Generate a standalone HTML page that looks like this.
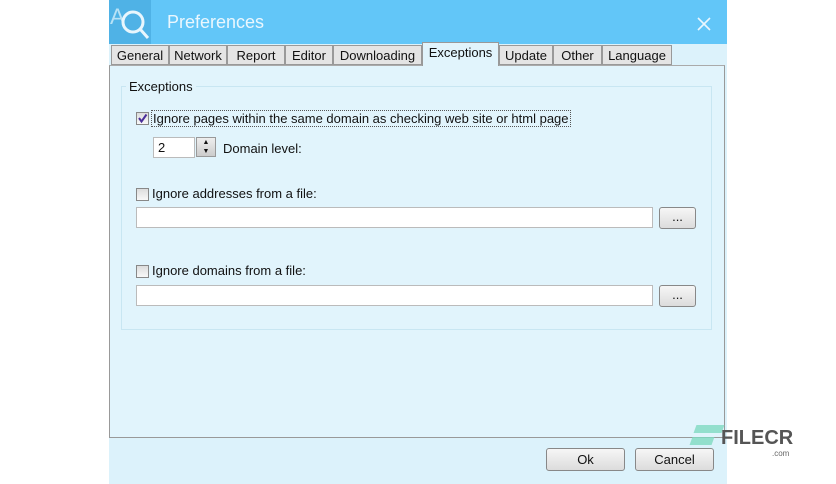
<!DOCTYPE html><html><head><style>
body{margin:0;width:836px;height:484px;background:#fff;position:relative;overflow:hidden;font-family:"Liberation Sans",sans-serif;font-size:12.5px;color:#111}
.a{position:absolute}
.tab{position:absolute;top:45px;height:20px;border:1px solid #999;background:#e4e4e4;line-height:20px;text-align:center;font-size:13px;box-sizing:border-box}
.cb{position:absolute;width:11px;height:11px;border:1px solid #888;background:linear-gradient(#ddd,#f8f8f8)}
.inp{position:absolute;height:21px;background:#fff;border:1px solid #bbb;box-sizing:border-box}
.btn{position:absolute;border:1px solid #888;border-radius:3px;background:linear-gradient(#f6f6f6,#dcdcdc);box-sizing:border-box;text-align:center;font-size:13px}
</style></head><body>
<div class="a" style="left:109px;top:0;width:618px;height:44px;background:#62c6f8"></div>
<div class="a" style="left:109px;top:0;width:42px;height:44px;background:#4fb2e6"></div>
<svg class="a" style="left:109px;top:2px" width="44" height="40"><text x="1" y="22" font-size="22" fill="#b8e2f6" font-family="Liberation Sans">A</text><circle cx="24" cy="20" r="10" fill="none" stroke="#e8f6fd" stroke-width="3"/><line x1="31" y1="27" x2="39" y2="36" stroke="#e8f6fd" stroke-width="3"/></svg>
<div class="a" style="left:167px;top:12px;font-size:18px;color:#eaf7fe">Preferences</div>
<svg class="a" style="left:697px;top:17px" width="14" height="14"><path d="M1 1L13 13M13 1L1 13" stroke="#eaf7fe" stroke-width="1.6"/></svg>
<div class="a" style="left:109px;top:44px;width:618px;height:440px;background:#dcf2fb"></div>
<div class="a" style="left:109px;top:65px;width:616px;height:373px;background:#e1f4fc;border:1px solid #999;border-top:1px solid #aaa;box-sizing:border-box"></div>
<div class="tab" style="left:111px;width:58px">General</div>
<div class="tab" style="left:169px;width:58px">Network</div>
<div class="tab" style="left:227px;width:58px">Report</div>
<div class="tab" style="left:285px;width:48px">Editor</div>
<div class="tab" style="left:333px;width:89px">Downloading</div>
<div class="tab" style="left:422px;width:77px;top:42px;height:24px;background:#e1f4fc;border-bottom:none">Exceptions</div>
<div class="tab" style="left:499px;width:54px">Update</div>
<div class="tab" style="left:553px;width:49px">Other</div>
<div class="tab" style="left:602px;width:70px">Language</div>
<div class="a" style="left:121px;top:86px;width:591px;height:244px;border:1px solid #c8e6f2;box-sizing:border-box"></div>
<div class="a" style="left:126px;top:79px;padding:0 3px;background:#e1f4fc;font-size:13px">Exceptions</div>
<div class="cb" style="left:136px;top:112px"></div>
<svg class="a" style="left:137px;top:113px" width="11" height="11"><path d="M2 5L4.5 8.5L9.5 1.5" stroke="#4a2f9a" stroke-width="2" fill="none"/></svg>
<div class="a" style="left:151px;top:110px;font-size:13px;border:1px dotted #555;padding:0 1px">Ignore pages within the same domain as checking web site or html page</div>
<div class="inp" style="left:153px;top:137px;width:42px;padding-left:4px;line-height:19px;font-size:13px">2</div>
<div class="a" style="left:196px;top:137px;width:20px;height:20px;border:1px solid #999;box-sizing:border-box;background:linear-gradient(#eee,#ccc);font-size:7px;line-height:9px;text-align:center">▲<br>▼</div>
<div class="a" style="left:223px;top:141px;font-size:13px">Domain level:</div>
<div class="cb" style="left:136px;top:188px"></div>
<div class="a" style="left:152px;top:186px;font-size:13px">Ignore addresses from a file:</div>
<div class="inp" style="left:136px;top:207px;width:517px"></div>
<div class="btn" style="left:659px;top:207px;width:37px;height:22px;line-height:18px">...</div>
<div class="cb" style="left:136px;top:265px"></div>
<div class="a" style="left:152px;top:263px;font-size:13px">Ignore domains from a file:</div>
<div class="inp" style="left:136px;top:285px;width:517px"></div>
<div class="btn" style="left:659px;top:285px;width:37px;height:22px;line-height:18px">...</div>
<div class="btn" style="left:546px;top:448px;width:79px;height:23px;line-height:22px">Ok</div>
<div class="btn" style="left:635px;top:448px;width:79px;height:23px;line-height:22px">Cancel</div>
<div class="a" style="left:695px;top:425px;width:28px;height:8px;background:#7fd9c0;opacity:.8;transform:skewX(-20deg)"></div>
<div class="a" style="left:691px;top:437px;width:22px;height:8px;background:#7fd9c0;opacity:.8;transform:skewX(-20deg)"></div>
<div class="a" style="left:721px;top:427px;font-size:20px;font-weight:bold;color:#555">FILECR</div>
<div class="a" style="left:772px;top:449px;font-size:8px;color:#666">.com</div>
</body></html>
